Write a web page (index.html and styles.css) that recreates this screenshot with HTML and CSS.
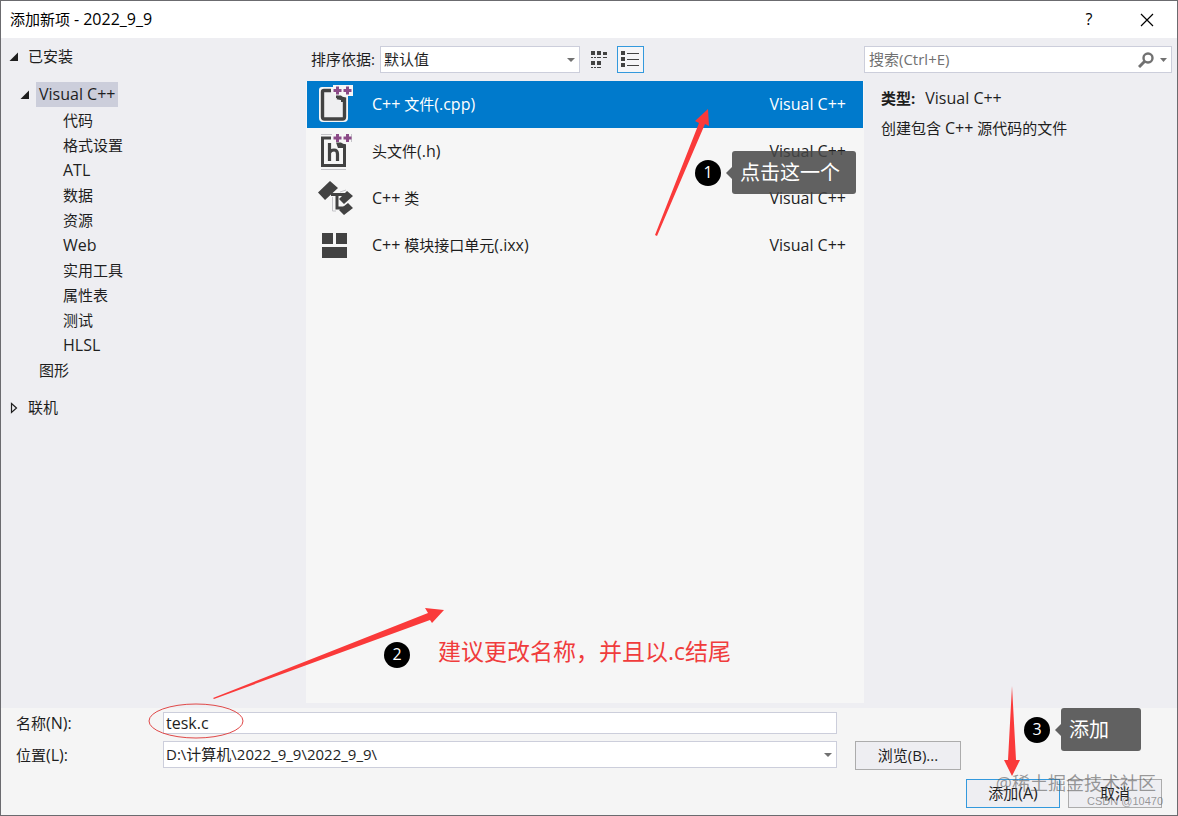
FILE: index.html
```html
<!DOCTYPE html>
<html lang="zh-CN">
<head>
    <meta charset="UTF-8">
    <meta name="viewport" content="width=device-width, initial-scale=1.0">
    <title>添加新项 - 2022_9_9</title>
    <link rel="stylesheet" href="styles.css">
</head>

<body>
<div class="dialog">
  <header class="titlebar">
    <h1 class="title">添加新项 <span class="latin">- 2022_9_9</span></h1>
    <button type="button" class="title-btn latin">?</button>
    <button type="button" class="title-btn" aria-label="关闭">
      <svg width="14" height="14" viewBox="0 0 14 14"><path d="M1 1L13 13M13 1L1 13" stroke="#000" stroke-width="1.2"/></svg>
    </button>
  </header>

  <main class="content">
    <!-- Дерево категорий -->
    <nav class="tree">
      <div class="tree-root">
        <svg class="toggle" width="10" height="10" viewBox="0 0 10 10"><path d="M9 0.500V9H0.500Z" fill="#1e1e1e"/></svg>
        <span>已安装</span>
      </div>
      <ul class="tree-list">
        <li>
          <div class="tree-group">
            <svg class="toggle" width="10" height="10" viewBox="0 0 10 10"><path d="M9 0.500V9H0.500Z" fill="#1e1e1e"/></svg>
            <span class="tree-active latin">Visual C++</span>
          </div>
          <ul class="tree-sub">
            <li>代码</li>
            <li>格式设置</li>
            <li class="latin">ATL</li>
            <li>数据</li>
            <li>资源</li>
            <li class="latin">Web</li>
            <li>实用工具</li>
            <li>属性表</li>
            <li>测试</li>
            <li class="latin">HLSL</li>
          </ul>
        </li>
        <li class="tree-leaf">图形</li>
      </ul>
      <div class="tree-root">
        <svg class="toggle" width="10" height="12" viewBox="0 0 10 12"><path d="M2.500 1.500L7.500 6L2.500 10.500Z" fill="none" stroke="#1e1e1e" stroke-width="1.200"/></svg>
        <span>联机</span>
      </div>
    </nav>

    <!-- Список шаблонов -->
    <section class="templates">
      <div class="toolbar">
        <label class="sort-label" for="sort">排序依据:</label>
        <div class="select sort-select">
          <select id="sort"><option>默认值</option></select>
        </div>
        <button type="button" class="view-btn" aria-label="小图标">
          <svg width="17" height="19" viewBox="0 0 17 19" fill="#424242">
            <path d="M1 1h4v4H1zM7 1h4v4H7zM13 2h4v3h-4zM1 11h4v4H1zM7 11h4v4H7z"/>
            <path d="M1 7h2v1H1zM4 7h2v1H4zM7 7h4v1H7zM13 7h4v1h-4zM1 17h2v1H1zM4 17h2v1H4zM7 17h4v1H7z"/>
          </svg>
        </button>
        <button type="button" class="view-btn view-active" aria-label="列表">
          <svg width="19" height="17" viewBox="0 0 19 17" fill="#424242">
            <path d="M0 0h4v4H0zM0 6h4v4H0zM0 12h4v4H0zM6 2h12v1H6zM6 8h12v1H6zM6 14h12v1H6z"/>
          </svg>
        </button>
      </div>

      <ul class="list">
        <li class="item item-active">
          <svg class="item-icon" width="36" height="38" viewBox="0 0 36 38">
            <path d="M4 1h11V-1h20v11h-5v22q0 4-4 4H5q-4 0-4-4V4q0-3 3-3z" fill="#f6f6f6"/>
            <path d="M13 4.500H6Q4.500 4.500 4.500 6V31Q4.500 33 6.500 33H24.500Q26.500 33 26.500 31V13L19 11.500" fill="#efeff1" stroke="#424242" stroke-width="3.400"/>
            <path d="M18 9.500H23L28 14V16H23V12H18z" fill="#424242"/>
            <path d="M15.500 4.500h8M19.500 0.500v8M25.500 4.500h8M29.500 0.500v8" stroke="#8b4a87" stroke-width="3"/>
          </svg>
          <span class="item-name"><span class="latin">C++</span> 文件<span class="latin">(.cpp)</span></span>
          <span class="latin">Visual C++</span>
        </li>
        <li class="item">
          <svg class="item-icon" width="36" height="38" viewBox="0 0 36 38">
            <path d="M3 1.500h11M33.500 1v8M3 36.500h25" stroke="#c4c4c8" fill="none"/>
            <path d="M13 5H4.500V32.500H26.500V12.500L20 11.500" fill="none" stroke="#424242" stroke-width="3"/>
            <path d="M18 9.500H23L28 13V15H20z" fill="#424242"/>
            <path d="M11.500 10V28M11.500 20Q12.500 17 16 17Q19.500 17 19.500 21V28" fill="none" stroke="#424242" stroke-width="3.200"/>
            <path d="M15.500 5h8M19.500 1v8M25.500 5h8M29.500 1v8" stroke="#8b4a87" stroke-width="3"/>
          </svg>
          <span class="item-name">头文件<span class="latin">(.h)</span></span>
          <span class="latin">Visual C++</span>
        </li>
        <li class="item">
          <svg class="item-icon" width="36" height="38" viewBox="0 0 36 38">
            <path d="M14.500 17V31H18M22 12L28 10" stroke="#c4c4c8" fill="none"/>
            <path d="M13 14.500H27M19 15V28H26" fill="none" stroke="#424242" stroke-width="3"/>
            <path d="M12 1L20 8L7 20L0 12.500ZM29 11L35 16L26 24L21 19ZM30 23L35 28L26 35L21 30Z" fill="#424242"/>
          </svg>
          <span class="item-name"><span class="latin">C++</span> 类</span>
          <span class="latin">Visual C++</span>
        </li>
        <li class="item">
          <svg class="item-icon" width="36" height="38" viewBox="0 0 36 38">
            <path d="M4 6h11v11H4zM18 6h11v11H18zM4 20h25v11H4z" fill="#424242"/>
          </svg>
          <span class="item-name"><span class="latin">C++</span> 模块接口单元<span class="latin">(.ixx)</span></span>
          <span class="latin">Visual C++</span>
        </li>
      </ul>

      <!-- Шаг 1 -->
      <div class="note step-one">
        <svg class="arrow" width="56" height="130" viewBox="0 0 56 130"><path d="M53 1L54 18L50 16L2 128L0 127L44 15L40 13Z" fill="#fa3a3a"/></svg>
        <span class="badge">1</span>
        <span class="tip">点击这一个</span>
      </div>
    </section>

    <!-- Описание выбранного шаблона -->
    <aside class="details">
      <div class="search">
        <input type="text" placeholder="搜索(Ctrl+E)" aria-label="搜索">
        <button type="button" class="search-btn" aria-label="搜索">
          <svg width="16" height="16" viewBox="0 0 16 16" fill="none" stroke="#717171"><circle cx="10" cy="6" r="4.500" stroke-width="2.400"/><path d="M6.500 9.500L1 15" stroke-width="3"/></svg>
        </button>
        <button type="button" class="search-btn" aria-label="搜索选项">
          <svg width="7" height="4" viewBox="0 0 7 4"><path d="M0 0H7L3.500 4Z" fill="#717171"/></svg>
        </button>
      </div>
      <p class="details-line"><b>类型:</b><span class="latin">Visual C++</span></p>
      <p class="details-line">创建包含 <span class="latin">C++</span> 源代码的文件</p>
    </aside>
  </main>

  <footer class="footer">
    <div class="fields">
      <label for="name">名称<span class="latin">(N):</span></label>
      <input type="text" id="name" class="name-input latin" value="tesk.c">
      <label class="location-label" for="location">位置<span class="latin">(L):</span></label>
      <div class="select location-select">
        <select id="location"><option>D:\计算机\2022_9_9\2022_9_9\</option></select>
      </div>
      <button type="button" class="btn browse-btn">浏览(B)...</button>
    </div>
    <div class="actions">
      <button type="submit" class="btn btn-primary">添加<span class="latin">(A)</span></button>
      <button type="button" class="btn">取消</button>
    </div>

    <!-- Шаг 2 -->
    <div class="note step-two">
      <svg class="arrow" width="300" height="136" viewBox="0 0 300 136">
        <ellipse cx="48" cy="116" rx="47" ry="17" fill="none" stroke="#e04848"/>
        <path d="M65 93L280 8L277 3L296 5L284 18L282 15L66 94Z" fill="#fa3a3a"/>
      </svg>
      <span class="badge">2</span>
      <span class="red-text">建议更改名称，并且以.c结尾</span>
    </div>

    <!-- Шаг 3 -->
    <div class="note step-three">
      <svg class="arrow" width="16" height="90" viewBox="0 0 16 90"><path d="M8 0L12 74H16L8 90L0 74H4Z" fill="#fa3a3a"/></svg>
      <span class="badge">3</span>
      <span class="tip">添加</span>
    </div>

    <div class="watermark">@稀土掘金技术社区</div>
    <div class="watermark watermark-small">CSDN @10470</div>
  </footer>
</div>
</body>
</html>
```
FILE: styles.css
```css
* {
  box-sizing: border-box;
}

body {
  margin: 0;
  font-family: "Open Sans", "Noto Sans CJK SC", sans-serif;
  font-size: 15px;
  line-height: 25px;
  color: #1e1e1e;
}

ul {
  list-style: none;
  margin: 0;
  padding: 0;
}

input,
select,
button {
  font: inherit;
  color: inherit;
  outline: none;
}

svg {
  display: block;
}

.latin {
  font-size: 16px;
}

.dialog {
  display: flex;
  flex-direction: column;
  min-height: 100vh;
  border: 1px solid #6b6b6f;
  background: #eeeef2;
}

/* title bar */
.titlebar {
  display: flex;
  align-items: center;
  height: 37px;
  padding: 0 1px 0 9px;
  background: #fff;
}

.title {
  flex: 1;
  margin: 0;
  font-size: 15px;
  font-weight: normal;
  color: #000;
}

.title-btn {
  display: flex;
  align-items: center;
  justify-content: center;
  width: 58px;
  height: 36px;
  padding: 0;
  border: none;
  background: transparent;
  color: #000;
}

.content {
  flex: 1;
  display: grid;
  grid-template-columns: 305px 1fr 313px;
}

/* tree */
.tree {
  padding-top: 6px;
}

.tree-root,
.tree-group {
  display: flex;
  align-items: center;
}

.tree-root {
  padding-left: 8px;
}

.tree-root .toggle {
  margin-right: 9px;
}

.tree-list {
  margin: 13px 0 12px;
}

.tree-group {
  padding-left: 19px;
}

.tree-group .toggle {
  margin-right: 6px;
}

.tree-active {
  padding: 0 3px;
  background: #cccedb;
}

.tree-sub {
  margin-top: 1px;
  padding-left: 62px;
}

.tree-leaf {
  padding-left: 38px;
}

/* templates */
.templates {
  position: relative;
  display: flex;
  flex-direction: column;
  padding-bottom: 5px;
}

.toolbar {
  display: flex;
  align-items: center;
  height: 27px;
  margin: 8px 0;
  padding-left: 5px;
}

.sort-label {
  width: 69px;
}

.select {
  position: relative;
}

.select select {
  display: block;
  width: 100%;
  height: 27px;
  padding: 0 20px 0 3px;
  border: 1px solid #cccedb;
  border-radius: 0;
  background: #fff;
  appearance: none;
}

.select::after {
  content: "";
  position: absolute;
  top: 12px;
  right: 5px;
  border: 4px solid transparent;
  border-top-color: #717171;
  border-bottom: none;
}

.sort-select {
  width: 200px;
  margin-right: 5px;
}

.view-btn {
  display: flex;
  align-items: center;
  justify-content: center;
  width: 27px;
  height: 27px;
  margin-right: 5px;
  padding: 0;
  border: 1px solid transparent;
  background: transparent;
}

.view-active {
  border-color: #3399dd;
  background: #f5f5f7;
}

.list {
  flex: 1;
  padding: 0 1px;
  background: #f6f6f6;
}

.item {
  display: flex;
  align-items: center;
  height: 47px;
  padding: 0 17px 0 11px;
}

.item-active {
  background: #007acc;
  color: #fff;
}

.item-icon {
  margin-right: 18px;
  overflow: visible;
}

.item-name {
  flex: 1;
}

/* details */
.details {
  padding: 8px 5px 0 0;
}

.search {
  display: flex;
  align-items: center;
  height: 27px;
  margin-bottom: 10px;
  padding-right: 4px;
  border: 1px solid #cccedb;
  background: #fff;
}

.search input {
  flex: 1;
  min-width: 0;
  padding: 0 4px;
  border: none;
  background: transparent;
}

.search input::placeholder {
  color: #717171;
}

.search-btn {
  margin-left: 6px;
  padding: 0;
  border: none;
  background: transparent;
}

.details-line {
  margin: 0;
  padding-left: 17px;
  line-height: 30px;
}

.details-line b {
  margin-right: 10px;
}

/* footer */
.footer {
  position: relative;
  padding: 4px 15px 7px;
  background: #f5f5f5;
}

.fields {
  display: grid;
  grid-template-columns: 147px 1fr 18px 106px;
  grid-template-rows: 22px 29px;
  row-gap: 7px;
  align-items: center;
  margin-right: 201px;
}

.name-input {
  width: 100%;
  height: 22px;
  padding: 0 2px;
  border: 1px solid #cccedb;
  background: #fff;
}

.location-label {
  grid-area: 2 / 1;
}

.location-select {
  grid-area: 2 / 2;
  align-self: start;
}

.location-select select {
  padding-left: 2px;
}

.browse-btn {
  grid-area: 2 / 4;
}

.actions {
  display: flex;
  justify-content: flex-end;
  gap: 8px;
  margin-top: 9px;
}

.actions .btn {
  width: 94px;
}

.btn {
  height: 29px;
  padding: 0;
  border: 1px solid #acacac;
  background: #eeeef2;
}

.btn-primary {
  border-color: #3399dd;
}

/* notes over the dialog */
.note {
  position: absolute;
  display: flex;
  align-items: center;
  pointer-events: none;
}

.arrow {
  position: absolute;
  top: 0;
  left: 0;
}

.badge {
  width: 26px;
  height: 26px;
  border-radius: 50%;
  background: #000;
  color: #fff;
  font-size: 16px;
  line-height: 24px;
  text-align: center;
}

.tip {
  position: relative;
  height: 43px;
  margin-left: 11px;
  padding: 0 8px;
  border-radius: 3px;
  background: rgba(70, 70, 70, 0.85);
  color: #fff;
  font-size: 20px;
  line-height: 43px;
}

.tip::before {
  content: "";
  position: absolute;
  top: 16px;
  left: -6px;
  border: 6px solid transparent;
  border-left: none;
  border-right-color: rgba(70, 70, 70, 0.85);
}

.step-one {
  top: 113px;
  right: 8px;
}

.step-one .arrow {
  top: -43px;
  left: -40px;
}

.step-one .tip {
  width: 124px;
}

.step-two {
  bottom: 139px;
  left: 383px;
}

.step-two .arrow {
  top: -29px;
  left: -236px;
}

.red-text {
  margin-left: 28px;
  padding-bottom: 8px;
  color: #f03c3c;
  font-size: 23px;
  line-height: 34px;
}

.step-three {
  top: 0;
  right: 36px;
}

.step-three .arrow {
  top: -22px;
  left: -20px;
}

.step-three .tip {
  width: 80px;
}

.watermark {
  position: absolute;
  right: 21px;
  bottom: 20px;
  color: rgba(90, 90, 90, 0.6);
  font-size: 18px;
  line-height: 24px;
  pointer-events: none;
}

.watermark-small {
  right: 14px;
  bottom: 6px;
  font-family: "Liberation Sans", sans-serif;
  font-size: 11px;
  line-height: 16px;
}
```
